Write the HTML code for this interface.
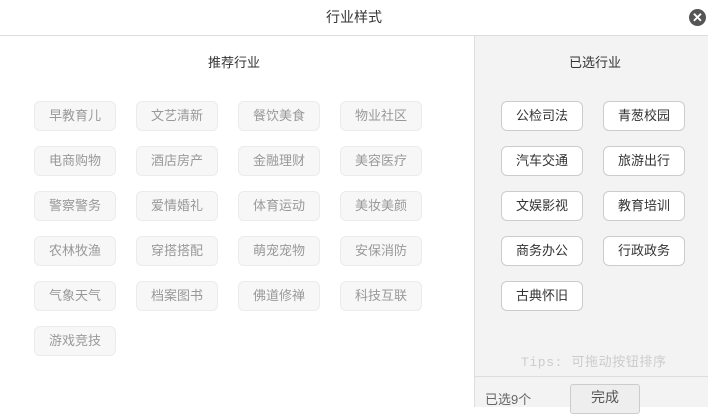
<!DOCTYPE html><html><head><meta charset="utf-8"><style>
*{margin:0;padding:0;box-sizing:border-box}
body{width:708px;height:407px;overflow:hidden;background:#fff;font-family:"Liberation Sans","Noto Sans CJK SC",sans-serif;position:relative;color:#333}
.hd{position:absolute;left:0;top:0;width:708px;height:36px;border-bottom:1px solid #ddd;text-align:center;line-height:34px;font-size:14px}
.x{position:absolute;left:689px;top:9px;width:17px;height:17px;border-radius:50%;background:#555;color:#fff;font-size:13px;line-height:17px;text-align:center;font-weight:bold}
.r{position:absolute;left:474px;top:36px;width:234px;height:371px;background:#f3f3f3;border-left:1px solid #ddd}
.t{position:absolute;font-size:13px;color:#333}
.b{position:absolute;width:82px;height:30px;border-radius:6px;font-size:13px;text-align:center;line-height:28px}
.l{background:#f7f7f7;border:1px solid #ebebeb;color:#999}
.s{background:#fff;border:1px solid #ccc;color:#333}
</style></head><body>
<div class="hd">行业样式</div><div class="x">✕</div>
<div class="t" style="left:208px;top:52px">推荐行业</div>
<div class="r"></div>
<div class="t" style="left:569px;top:52px">已选行业</div>
<div class="b l" style="left:34px;top:101px">早教育儿</div><div class="b l" style="left:136px;top:101px">文艺清新</div><div class="b l" style="left:238px;top:101px">餐饮美食</div><div class="b l" style="left:340px;top:101px">物业社区</div>
<div class="b l" style="left:34px;top:146px">电商购物</div><div class="b l" style="left:136px;top:146px">酒店房产</div><div class="b l" style="left:238px;top:146px">金融理财</div><div class="b l" style="left:340px;top:146px">美容医疗</div>
<div class="b l" style="left:34px;top:191px">警察警务</div><div class="b l" style="left:136px;top:191px">爱情婚礼</div><div class="b l" style="left:238px;top:191px">体育运动</div><div class="b l" style="left:340px;top:191px">美妆美颜</div>
<div class="b l" style="left:34px;top:236px">农林牧渔</div><div class="b l" style="left:136px;top:236px">穿搭搭配</div><div class="b l" style="left:238px;top:236px">萌宠宠物</div><div class="b l" style="left:340px;top:236px">安保消防</div>
<div class="b l" style="left:34px;top:281px">气象天气</div><div class="b l" style="left:136px;top:281px">档案图书</div><div class="b l" style="left:238px;top:281px">佛道修禅</div><div class="b l" style="left:340px;top:281px">科技互联</div>
<div class="b l" style="left:34px;top:326px">游戏竞技</div>
<div class="b s" style="left:501px;top:101px">公检司法</div><div class="b s" style="left:603px;top:101px">青葱校园</div>
<div class="b s" style="left:501px;top:146px">汽车交通</div><div class="b s" style="left:603px;top:146px">旅游出行</div>
<div class="b s" style="left:501px;top:191px">文娱影视</div><div class="b s" style="left:603px;top:191px">教育培训</div>
<div class="b s" style="left:501px;top:236px">商务办公</div><div class="b s" style="left:603px;top:236px">行政政务</div>
<div class="b s" style="left:501px;top:281px">古典怀旧</div>
<div class="t" style="left:521px;top:351px;font-size:13px;letter-spacing:0.6px;color:#ccc;font-family:'Liberation Mono','Noto Sans CJK SC',monospace">Tips: 可拖动按钮排序</div>
<div style="position:absolute;left:475px;top:376px;width:233px;border-top:1px solid #ddd"></div>
<div class="t" style="left:485px;top:389px;color:#666">已选9个</div>
<div style="position:absolute;left:570px;top:384px;width:70px;height:30px;border:1px solid #ccc;border-radius:3px;background:#eee;text-align:center;line-height:24px;font-size:14px;color:#555">完成</div>
</body></html>
